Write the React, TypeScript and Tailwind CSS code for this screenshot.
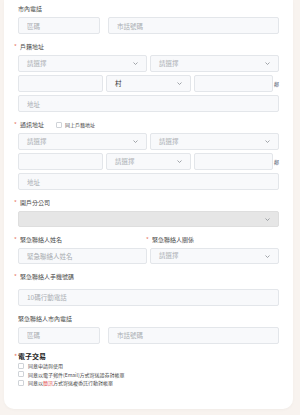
import React from 'react';

const font = { fontFamily: '"Noto Sans CJK TC", "Noto Sans", sans-serif' };

const Chevron: React.FC = () => (
    <svg width="5" height="3" viewBox="0 0 5 3" className="shrink-0">
        <path d="M0.5 0.5 L2.5 2.5 L4.5 0.5" fill="none" stroke="#8a8f96" strokeWidth="0.8" />
    </svg>
);

const Label: React.FC<{ text: string; required?: boolean; className?: string }> = ({ text, required, className }) => (
    <div className={`flex items-center h-[8px] text-[6px] leading-[8px] text-[#4a4a4a] ${required ? '-ml-[4px]' : ''} ${className ?? ''}`}>
        {required && <span className="w-[6px] text-[#e8775c]">*</span>}
        <span>{text}</span>
    </div>
);

const Field: React.FC<{ placeholder?: string; className?: string }> = ({ placeholder, className }) => (
    <input
        placeholder={placeholder}
        className={`h-[17px] min-w-0 rounded-[2px] border border-[#e3e6ea] bg-[#f8f9fb] px-[8px] text-[6.5px] text-[#333] outline-none placeholder:text-[#a9adb2] ${className ?? ''}`}
        style={font}
    />
);

const Select: React.FC<{ value?: string; placeholder?: string; className?: string; disabled?: boolean }> = ({ value, placeholder, className, disabled }) => (
    <div className={`flex h-[17px] min-w-0 items-center justify-between rounded-[2px] border px-[8px] text-[6.5px] ${disabled ? 'border-[#dedede] bg-[#e6e6e6]' : 'border-[#e3e6ea] bg-[#f8f9fb]'} ${className ?? ''}`}>
        <span className={value ? 'text-[#333]' : 'text-[#a9adb2]'}>{value ?? placeholder ?? ''}</span>
        <Chevron />
    </div>
);

const Box: React.FC<{ className?: string }> = ({ className }) => (
    <span className={`inline-block h-[6px] w-[6px] shrink-0 rounded-[1px] border border-[#cfd3d8] bg-white ${className ?? ''}`} />
);

const AddressBlock: React.FC<{ mid: string; midIsValue?: boolean }> = ({ mid, midIsValue }) => (
    <div className="mt-[4px] flex flex-col gap-[3px]">
        <div className="grid grid-cols-2 gap-[3px]">
            <Select placeholder="請選擇" />
            <Select placeholder="請選擇" />
        </div>
        <div className="flex items-center gap-[3px]">
            <Field className="w-[85px]" />
            {midIsValue ? <Select value={mid} className="w-[85px]" /> : <Select placeholder={mid} className="w-[85px]" />}
            <Field className="w-[79px]" />
            <span className="-ml-[2px] text-[5px] text-[#4a5568]">鄰</span>
        </div>
        <Field placeholder="地址" className="w-full" />
    </div>
);

const App: React.FC = () => {
    return (
        <div className="min-h-[415px] w-[300px] bg-[#f8f3ef]" style={font}>
            <div className="ml-[4px] w-[289px] rounded-b-[10px] bg-white px-[14px] pt-[5px] pb-[22px] shadow-[0_1px_3px_rgba(0,0,0,0.03)]">
                {/* 市內電話 */}
                <Label text="市內電話" />
                <div className="mt-[4px] flex gap-[8px]">
                    <Field placeholder="區碼" className="w-[82px]" />
                    <Field placeholder="市話號碼" className="flex-1" />
                </div>

                {/* 戶籍地址 */}
                <Label text="戶籍地址" required className="mt-[9px]" />
                <AddressBlock mid="村" midIsValue />

                {/* 通訊地址 */}
                <div className="mt-[9px] flex items-center">
                    <Label text="通訊地址" required />
                    <Box className="ml-[12px]" />
                    <span className="ml-[3px] text-[5px] text-[#4a4a4a]">同上戶籍地址</span>
                </div>
                <AddressBlock mid="請選擇" />

                {/* 開戶分公司 */}
                <Label text="開戶分公司" required className="mt-[9px]" />
                <Select disabled className="mt-[4px] !h-[16px]" />

                {/* 緊急聯絡人 */}
                <div className="mt-[9px] grid grid-cols-2 gap-[3px]">
                    <div className="flex flex-col">
                        <Label text="緊急聯絡人姓名" required />
                        <Field placeholder="緊急聯絡人姓名" className="mt-[4px] w-full !h-[16px]" />
                    </div>
                    <div className="flex flex-col">
                        <Label text="緊急聯絡人關係" required />
                        <Select placeholder="請選擇" className="mt-[4px] !h-[16px]" />
                    </div>
                </div>

                <Label text="緊急聯絡人手機號碼" required className="mt-[9px]" />
                <Field placeholder="10碼行動電話" className="mt-[4px] w-full" />

                <Label text="緊急聯絡人市內電話" className="mt-[9px]" />
                <div className="mt-[4px] flex gap-[8px]">
                    <Field placeholder="區碼" className="w-[82px]" />
                    <Field placeholder="市話號碼" className="flex-1" />
                </div>

                {/* 電子交易 */}
                <div className="mt-[8px] -ml-[4px] flex items-center text-[7px] leading-[9px] font-bold text-[#222]">
                    <span className="w-[4px] font-normal text-[#e8775c]">*</span>
                    <span>電子交易</span>
                </div>
                <div className="mt-[1px] flex flex-col text-[5px] text-[#4a4a4a]">
                    <label className="flex h-[8.5px] items-center gap-[4px]"><Box />同意申請與使用</label>
                    <label className="flex h-[8.5px] items-center gap-[4px]"><Box />同意以電子郵件(Email)方式寄送證券對帳單</label>
                    <label className="flex h-[8.5px] items-center gap-[4px]"><Box /><span>同意以<span className="text-[#e0474c]">簡訊</span>方式寄送複委託行動對帳單</span></label>
                </div>
            </div>
        </div>
    );
};

export default App;
